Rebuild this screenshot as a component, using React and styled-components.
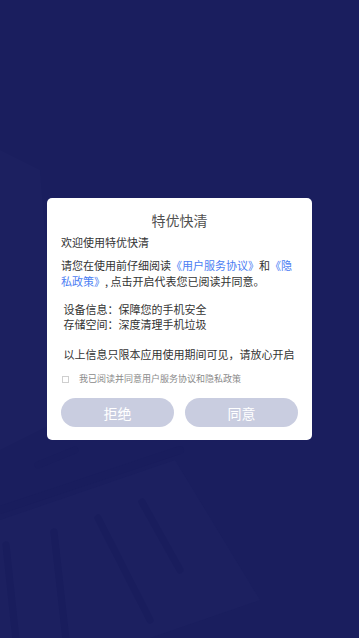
import React, { useState } from 'react';
import styled, { createGlobalStyle } from 'styled-components';

const GlobalStyle = createGlobalStyle`
  html, body {
    margin: 0;
    padding: 0;
    background: #1a1e5e;
  }
  * {
    box-sizing: border-box;
  }
`

const App = () => {
  const [checked, setChecked] = useState(false)

  return (
    <Page>
      <GlobalStyle />
      <Backdrop viewBox="0 0 359 638" preserveAspectRatio="none">
        <polygon points="0,150 40,170 60,420 0,450" fill="#1c2060" />
        <polygon points="0,520 175,460 260,600 150,638 0,638" fill="#1c2060" />
        <path d="M0 510 L180 450" stroke="#191d5d" strokeWidth="8" strokeLinecap="round" />
        <path d="M38 465 L75 450" stroke="#191d5d" strokeWidth="7" strokeLinecap="round" />
        <path d="M6 545 L16 640" stroke="#191d5d" strokeWidth="7" strokeLinecap="round" />
        <path d="M54 532 L66 640" stroke="#191d5d" strokeWidth="7" strokeLinecap="round" />
        <path d="M98 518 L150 620" stroke="#191d5d" strokeWidth="7" strokeLinecap="round" />
        <path d="M142 502 L180 570" stroke="#191d5d" strokeWidth="7" strokeLinecap="round" />
      </Backdrop>
      <Card>
        <Title>特优快清</Title>
        <Welcome>欢迎使用特优快清</Welcome>
        <Paragraph>
          请您在使用前仔细阅读<Link>《用户服务协议》</Link>和<Link>《隐私政策》</Link>, 点击开启代表您已阅读并同意。
        </Paragraph>
        <InfoBlock>
          <InfoLine> 设备信息：保障您的手机安全</InfoLine>
          <InfoLine> 存储空间：深度清理手机垃圾</InfoLine>
        </InfoBlock>
        <Notice> 以上信息只限本应用使用期间可见，请放心开启</Notice>
        <AgreeRow onClick={() => setChecked(!checked)}>
          <CheckBox $checked={checked} />
          <AgreeText>我已阅读并同意用户服务协议和隐私政策</AgreeText>
        </AgreeRow>
        <Buttons>
          <Btn>拒绝</Btn>
          <Btn>同意</Btn>
        </Buttons>
      </Card>
    </Page>
  )
}

export default App;

const Page = styled.div`
  position: relative;
  width: 100%;
  height: 638px;
  overflow: hidden;
  display: flex;
  align-items: center;
  justify-content: center;
  background: #1a1e5e;
  font-family: "Noto Sans CJK SC", "Noto Sans", sans-serif;
`
const Backdrop = styled.svg`
  position: absolute;
  inset: 0;
  width: 100%;
  height: 100%;
`
const Card = styled.div`
  position: relative;
  width: 265px;
  background: #ffffff;
  border-radius: 5px;
  padding: 12px 14px 13px;
  display: flex;
  flex-direction: column;
`
const Title = styled.div`
  text-align: center;
  font-size: 14px;
  line-height: 20px;
  color: #505050;
`
const Welcome = styled.div`
  margin-top: 4px;
  font-size: 11px;
  line-height: 16px;
  color: #333333;
`
const Paragraph = styled.div`
  margin-top: 7px;
  font-size: 11px;
  line-height: 16px;
  color: #333333;
`
const Link = styled.span`
  color: #4a7df3;
`
const InfoBlock = styled.div`
  margin-top: 13px;
  display: flex;
  flex-direction: column;
`
const InfoLine = styled.div`
  font-size: 11px;
  line-height: 15px;
  color: #333333;
  white-space: pre;
`
const Notice = styled.div`
  margin-top: 14px;
  font-size: 11px;
  line-height: 16px;
  color: #333333;
  white-space: pre;
`
const AgreeRow = styled.div`
  margin-top: 11px;
  height: 12px;
  display: flex;
  align-items: center;
  gap: 10px;
  cursor: pointer;
`
const CheckBox = styled.span`
  margin-left: 1px;
  width: 7px;
  height: 7px;
  border: 1px solid #cfcfcf;
  background: ${props => (props.$checked ? '#4a7df3' : '#ffffff')};
`
const AgreeText = styled.span`
  font-size: 9px;
  line-height: 12px;
  color: #8a8a8a;
`
const Buttons = styled.div`
  margin-top: 13px;
  display: flex;
  justify-content: space-between;
  gap: 11px;
`
const Btn = styled.button`
  flex: 1;
  height: 29px;
  border: none;
  border-radius: 15px;
  background: #c9cde0;
  color: #ffffff;
  font-family: "Noto Sans CJK SC", sans-serif;
  font-size: 14px;
  cursor: pointer;
`
